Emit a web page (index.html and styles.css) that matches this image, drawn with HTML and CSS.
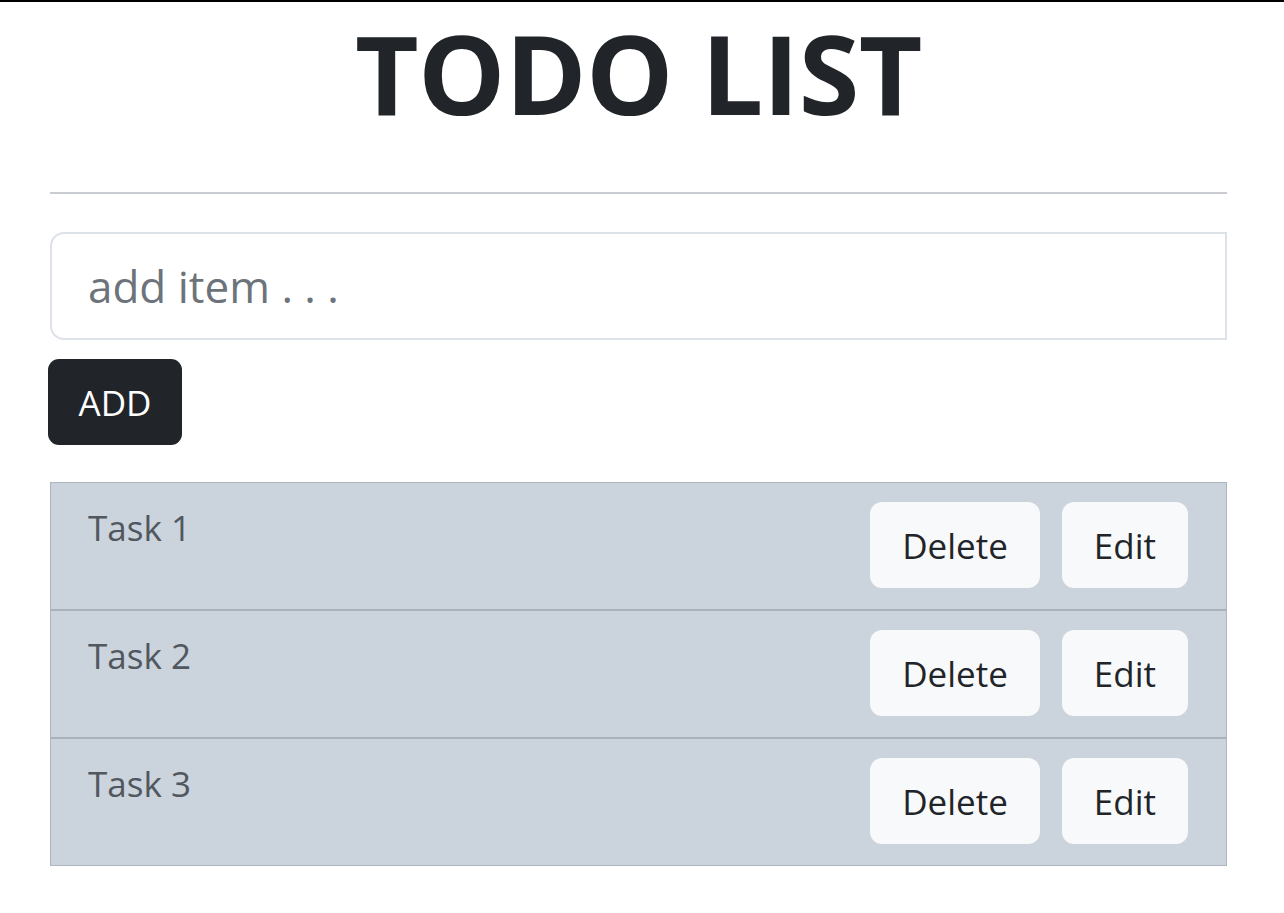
FILE: index.html
```html
<!DOCTYPE html>
<html lang="en">
<head>
<meta charset="utf-8">
<title>Todo List</title>
<link rel="stylesheet" href="styles.css">
</head>
<body>
<div class="topbar"></div>
<main class="app">
  <h1 class="title">TODO LIST</h1>
  <hr class="divider">
  <form class="add-form">
    <input class="add-input" type="text" placeholder="add item . . .">
    <button class="add-btn" type="button">ADD</button>
  </form>
  <ul class="list">
    <li class="item">
      <span class="item-text">Task 1</span>
      <div class="actions">
        <button class="btn-light" type="button">Delete</button>
        <button class="btn-light" type="button">Edit</button>
      </div>
    </li>
    <li class="item">
      <span class="item-text">Task 2</span>
      <div class="actions">
        <button class="btn-light" type="button">Delete</button>
        <button class="btn-light" type="button">Edit</button>
      </div>
    </li>
    <li class="item">
      <span class="item-text">Task 3</span>
      <div class="actions">
        <button class="btn-light" type="button">Delete</button>
        <button class="btn-light" type="button">Edit</button>
      </div>
    </li>
  </ul>
</main>
</body>
</html>
```

FILE: styles.css
```css
* { box-sizing: border-box; }

html, body {
  margin: 0;
  padding: 0;
  background: #ffffff;
  font-family: "Open Sans", "Noto Sans", sans-serif;
  color: #212529;
}

.topbar {
  height: 2px;
  background: #000000;
}

.app {
  width: 1177px;
  margin-left: 50px;
  display: flex;
  flex-direction: column;
}

.title {
  margin: 4px 0 0 0;
  font-size: 110px;
  line-height: 132px;
  font-weight: 700;
  text-align: center;
  letter-spacing: -0.5px;
  color: #212529;
}

.divider {
  margin: 54px 0 0 0;
  border: 0;
  height: 2px;
  background: #c9ccd0;
}

.add-form {
  margin: 38px 0 0 0;
  display: flex;
  flex-direction: column;
  align-items: flex-start;
}

.add-input {
  width: 100%;
  height: 108px;
  border: 2px solid #dde2e8;
  border-radius: 14px 0 0 14px;
  padding: 0 36px;
  font-family: inherit;
  font-size: 44px;
  color: #212529;
  outline: none;
}

.add-input::placeholder {
  color: #6c737a;
}

.add-btn {
  margin: 19px 0 0 -2px;
  width: 134px;
  height: 86px;
  border: 0;
  border-radius: 11px;
  background: #212529;
  color: #ffffff;
  font-family: inherit;
  font-size: 35px;
  padding: 0;
}

.list {
  list-style: none;
  margin: 37px 0 0 0;
  padding: 0;
  border: 1px solid #adb5bd;
  background: #cbd3dc;
}

.item {
  display: flex;
  justify-content: space-between;
  align-items: flex-start;
  padding: 19px 38px 21px 37px;
  border-top: 2px solid #a9b1ba;
}

.item:first-child {
  border-top: 0;
}

.item-text {
  font-size: 35px;
  line-height: 52px;
  color: #50575e;
}

.actions {
  display: flex;
  gap: 22px;
}

.btn-light {
  height: 86px;
  padding: 0 32px;
  border: 0;
  border-radius: 12px;
  background: #f8f9fa;
  color: #212529;
  font-family: inherit;
  font-size: 35px;
}
```
